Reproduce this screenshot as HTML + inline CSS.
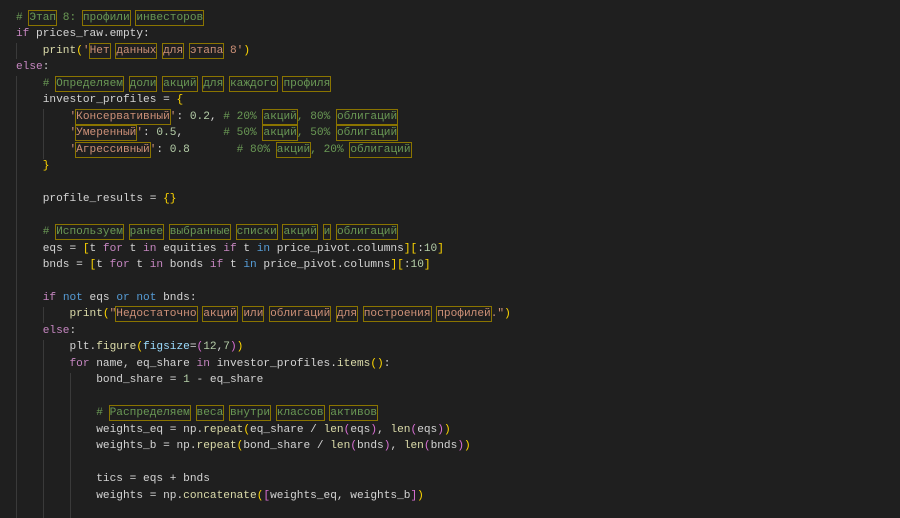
<!DOCTYPE html>
<html><head><meta charset="utf-8"><style>
html,body{margin:0;padding:0;background:#1f1f1f;width:900px;height:518px;overflow:hidden}
pre{margin:0;position:absolute;left:16px;top:10px;font-family:"Liberation Mono","DejaVu Sans Mono",monospace;font-size:11.15px;line-height:16.47px;color:#d4d4d4;white-space:pre}
.c{color:#6a9955}.k{color:#c586c0}.o{color:#569cd6}.s{color:#ce9178}.n{color:#b5cea8}.f{color:#dcdcaa}.p{color:#9cdcfe}
.y{color:#ffd700}.m{color:#da70d6}.l{color:#179fff}
.b{outline:1px solid #8a7400;outline-offset:0px;padding:1px 0}
.g{position:absolute;width:1px;background:#3a3a3a}
</style></head><body>
<div class="g" style="left:16px;top:43px;height:16px"></div>
<div class="g" style="left:16px;top:76px;height:442px"></div>
<div class="g" style="left:43px;top:109px;height:50px"></div>
<div class="g" style="left:43px;top:307px;height:16px"></div>
<div class="g" style="left:43px;top:340px;height:178px"></div>
<div class="g" style="left:70px;top:373px;height:145px"></div>
<pre><span class="c"># <span class="b">Этап</span> 8: <span class="b">профили</span> <span class="b">инвесторов</span></span>
<span class="k">if</span> prices_raw.empty:
    <span class="f">print</span><span class="y">(</span><span class="s">'<span class="b">Нет</span> <span class="b">данных</span> <span class="b">для</span> <span class="b">этапа</span> 8'</span><span class="y">)</span>
<span class="k">else</span>:
    <span class="c"># <span class="b">Определяем</span> <span class="b">доли</span> <span class="b">акций</span> <span class="b">для</span> <span class="b">каждого</span> <span class="b">профиля</span></span>
    investor_profiles = <span class="y">{</span>
        <span class="s">'<span class="b">Консервативный</span>'</span>: <span class="n">0.2</span>, <span class="c"># 20% <span class="b">акций</span>, 80% <span class="b">облигаций</span></span>
        <span class="s">'<span class="b">Умеренный</span>'</span>: <span class="n">0.5</span>,      <span class="c"># 50% <span class="b">акций</span>, 50% <span class="b">облигаций</span></span>
        <span class="s">'<span class="b">Агрессивный</span>'</span>: <span class="n">0.8</span>       <span class="c"># 80% <span class="b">акций</span>, 20% <span class="b">облигаций</span></span>
    <span class="y">}</span>

    profile_results = <span class="y">{}</span>

    <span class="c"># <span class="b">Используем</span> <span class="b">ранее</span> <span class="b">выбранные</span> <span class="b">списки</span> <span class="b">акций</span> <span class="b">и</span> <span class="b">облигаций</span></span>
    eqs = <span class="y">[</span>t <span class="k">for</span> t <span class="k">in</span> equities <span class="k">if</span> t <span class="o">in</span> price_pivot.columns<span class="y">][</span>:<span class="n">10</span><span class="y">]</span>
    bnds = <span class="y">[</span>t <span class="k">for</span> t <span class="k">in</span> bonds <span class="k">if</span> t <span class="o">in</span> price_pivot.columns<span class="y">][</span>:<span class="n">10</span><span class="y">]</span>

    <span class="k">if</span> <span class="o">not</span> eqs <span class="o">or</span> <span class="o">not</span> bnds:
        <span class="f">print</span><span class="y">(</span><span class="s">"<span class="b">Недостаточно</span> <span class="b">акций</span> <span class="b">или</span> <span class="b">облигаций</span> <span class="b">для</span> <span class="b">построения</span> <span class="b">профилей</span>."</span><span class="y">)</span>
    <span class="k">else</span>:
        plt.<span class="f">figure</span><span class="y">(</span><span class="p">figsize</span>=<span class="m">(</span><span class="n">12</span>,<span class="n">7</span><span class="m">)</span><span class="y">)</span>
        <span class="k">for</span> name, eq_share <span class="k">in</span> investor_profiles.<span class="f">items</span><span class="y">()</span>:
            bond_share = <span class="n">1</span> - eq_share

            <span class="c"># <span class="b">Распределяем</span> <span class="b">веса</span> <span class="b">внутри</span> <span class="b">классов</span> <span class="b">активов</span></span>
            weights_eq = np.<span class="f">repeat</span><span class="y">(</span>eq_share / <span class="f">len</span><span class="m">(</span>eqs<span class="m">)</span>, <span class="f">len</span><span class="m">(</span>eqs<span class="m">)</span><span class="y">)</span>
            weights_b = np.<span class="f">repeat</span><span class="y">(</span>bond_share / <span class="f">len</span><span class="m">(</span>bnds<span class="m">)</span>, <span class="f">len</span><span class="m">(</span>bnds<span class="m">)</span><span class="y">)</span>

            tics = eqs + bnds
            weights = np.<span class="f">concatenate</span><span class="y">(</span><span class="m">[</span>weights_eq, weights_b<span class="m">]</span><span class="y">)</span>
</pre>
</body></html>
